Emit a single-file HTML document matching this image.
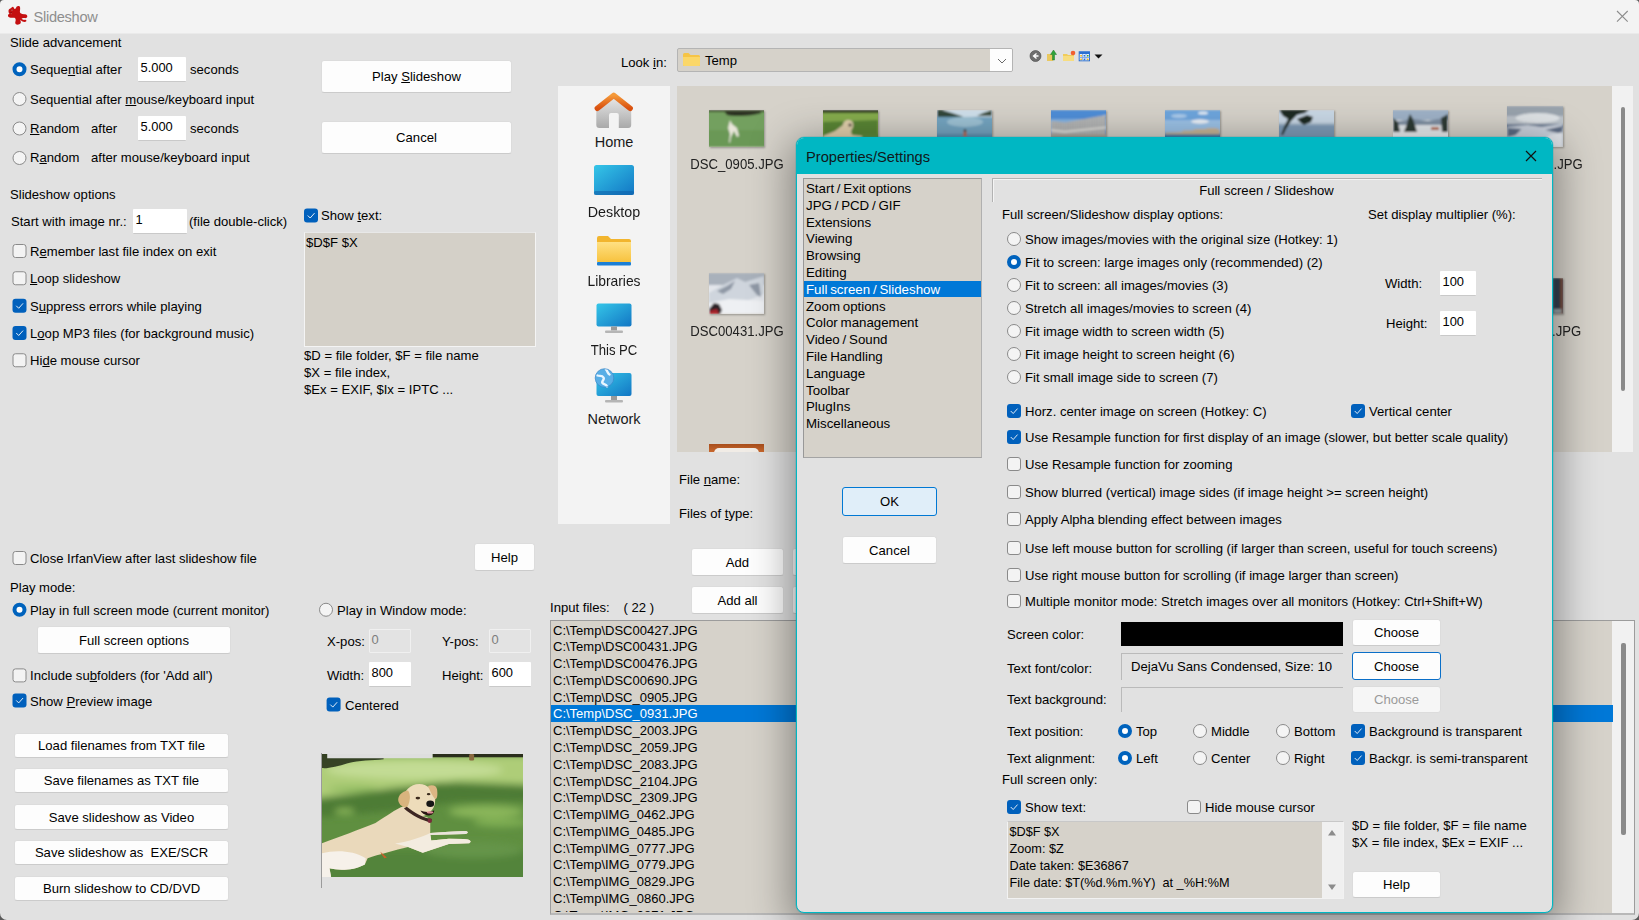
<!DOCTYPE html>
<html lang="en"><head><meta charset="utf-8"><title>Slideshow</title>
<style>
*{margin:0;padding:0}
html,body{width:1639px;height:920px;overflow:hidden;background:#e1e1e1}
body{position:relative;font-family:"Liberation Sans",sans-serif;font-size:13px;color:#000}
.t{position:absolute;white-space:pre;height:16px;line-height:16px;font-size:13.1px}
.t u,.b u{text-decoration:underline;text-underline-offset:1px;text-decoration-thickness:1px}
.seg{font-family:"Liberation Sans",sans-serif}
.pl{font-size:14.5px;text-align:center;height:18px;line-height:18px;color:#1a1a1a}
.fl{font-size:14.5px;text-align:center;height:18px;line-height:18px;color:#222;transform:scaleX(.905)}
.r{position:absolute;width:14px;height:14px;border-radius:50%;box-sizing:border-box;border:1px solid #8a8a8a;background:#f4f4f4}
.r.on{border:4.500px solid #0063bd;background:#fff}
.c{position:absolute;width:14px;height:14px;border-radius:3px;box-sizing:border-box;border:1px solid #8a8a8a;background:#f3f3f3}
.c.on{border:none;background:#0060bc}
.c svg{position:absolute;left:0;top:0;width:14px;height:14px}
.c path{stroke:#fff;stroke-width:.95;opacity:.92;fill:none;stroke-linecap:round;stroke-linejoin:round}
.b{position:absolute;box-sizing:border-box;background:#fdfdfd;border:1px solid #dcdcdc;border-bottom-color:#cbcbcb;border-radius:3px;text-align:center;font-size:13.1px;white-space:pre}
.b.def{background:#e0eef9;border:1px solid #0078d4}
.b.foc{border:1px solid #0a6fc8;background:#fdfdfd}
.b.disb{color:#9a9a9a;background:#f6f6f6;border-color:#dcdcdc}
.i{position:absolute;box-sizing:border-box;background:#fff;border-bottom:1px solid #c9c9c9;font-size:12.9px;line-height:16px;padding:3px 0 0 2.5px;white-space:pre;border-radius:1px}
.i.dis{background:#e3e3e3;border:1px solid #f0f0f0;color:#7d7d7d;padding:1.5px 0 0 1.5px}
.li{position:absolute;left:0;right:0;height:16.4px;line-height:17.6px;font-size:13px;white-space:pre;padding-left:2px}
.li.sel{background:#0078d7;color:#fff}
.cl .li{font-size:13.3px}
#dlg{position:absolute;left:796px;top:137px;width:757px;height:776px;box-sizing:border-box;background:#e1e1e1;border:1px solid #00b7c3;border-radius:8px;box-shadow:0 0 0 .5px rgba(0,150,165,.35),0 10px 40px 6px rgba(0,0,0,.38)}
</style></head>
<body>
<div style="position:absolute;left:0px;top:0px;width:1639px;height:34px;background:linear-gradient(180deg,#f3f3f3 0,#f3f3f3 33px,#eaeaea 33px)"></div>
<svg style="position:absolute;left:6px;top:5px" width="23" height="21" viewBox="89 74.200 341.320 311.640">
<path d="M245 100C258 88 282 86 292 96 302 108 300 135 296 160 293 178 296 190 306 198 322 210 345 214 368 212 392 210 408 228 405 246 402 264 385 272 362 268 342 264 326 268 320 280 332 292 350 300 372 294 388 290 396 304 390 316 380 328 352 328 334 318 322 310 310 300 302 292 304 310 314 330 306 346 296 364 262 370 244 364 226 356 222 336 230 316 236 298 234 278 222 266 206 262 180 266 158 264 136 262 118 250 118 230 118 216 128 208 142 208 130 196 122 172 128 150 132 134 146 126 162 122 172 112 184 98 194 102 204 108 206 124 216 132 228 140 238 120 245 100z" fill="#c40f10"/>
<path d="M160 150c10-8 22-6 28 2M150 185c8 6 20 6 28 0" stroke="#7a0a0a" stroke-width="9" fill="none"/><circle cx="178" cy="150" r="9" fill="#d8c8b8" opacity=".8"/><circle cx="166" cy="205" r="7" fill="#d8c8b8" opacity=".6"/></svg>
<div class="t seg" style="left:33.5px;top:9px;color:#8e8e8e;font-size:14.6px;letter-spacing:-0.28px">Slideshow</div>
<svg style="position:absolute;left:1616px;top:10px" width="13" height="13" viewBox="0 0 13 13"><path d="M1 1L11.700 11.700M11.700 1L1 11.700" stroke="#8c8c8c" stroke-width="1.100" fill="none"/></svg>
<svg style="position:absolute;left:0;top:0" width="1639" height="920" viewBox="0 0 1639 920"><path d="M0 0h4A4 4 0 0 0 0 4zM1639 0h-4a4 4 0 0 1 4 4zM0 920h7A7 7 0 0 1 0 913zM1639 920h-7a7 7 0 0 0 7-7z" fill="#5a5a5a"/></svg>
<div class="t " style="left:10px;top:35px;">Slide advancement</div>
<div class="r on" style="left:12px;top:62px;transform:translate(0.5px,0.3px)"></div>
<div class="t " style="left:30px;top:62px;">Seque<u>n</u>tial after</div>
<div class="i " style="left:138px;top:57px;width:48px;height:25px">5.000</div>
<div class="t " style="left:190px;top:62px;">seconds</div>
<div class="r" style="left:12px;top:92px;transform:translate(0.5px,0px)"></div>
<div class="t " style="left:30px;top:92px;">Sequential after <u>m</u>ouse/keyboard input</div>
<div class="r" style="left:12px;top:121px;transform:translate(0.5px,0.5px)"></div>
<div class="t " style="left:30px;top:121px;"><u>R</u>andom</div>
<div class="t " style="left:91px;top:121px;">after</div>
<div class="i " style="left:138px;top:116px;width:48px;height:25px">5.000</div>
<div class="t " style="left:190px;top:121px;">seconds</div>
<div class="r" style="left:12px;top:151px;transform:translate(0.5px,0px)"></div>
<div class="t " style="left:30px;top:150px;">R<u>a</u>ndom</div>
<div class="t " style="left:91px;top:150px;">after mouse/keyboard input</div>
<div class="b " style="left:321px;top:60px;width:191px;height:33px;line-height:32px">Play <u>S</u>lideshow</div>
<div class="b " style="left:321px;top:121px;width:191px;height:33px;line-height:32px">Cancel</div>
<div class="t " style="left:10px;top:187px;">Slideshow options</div>
<div class="t " style="left:11px;top:214px;">Start with image nr.:</div>
<div class="i " style="left:133px;top:209px;width:54px;height:25px">1</div>
<div class="t " style="left:189px;top:214px;">(file double-click)</div>
<div class="c" style="left:12px;top:244px;transform:translate(0.5px,0px)"></div>
<div class="t " style="left:30px;top:244px;">R<u>e</u>member last file index on exit</div>
<div class="c" style="left:12px;top:271px;transform:translate(0.5px,0.25px)"></div>
<div class="t " style="left:30px;top:271px;"><u>L</u>oop slideshow</div>
<div class="c on" style="left:12px;top:298px;transform:translate(0.5px,0.75px)"><svg viewBox="0 0 14 14"><path d="M4 7.300L6.200 9.500 10.300 4.900"/></svg></div>
<div class="t " style="left:30px;top:299px;">S<u>u</u>ppress errors while playing</div>
<div class="c on" style="left:12px;top:326px;transform:translate(0.5px,0px)"><svg viewBox="0 0 14 14"><path d="M4 7.300L6.200 9.500 10.300 4.900"/></svg></div>
<div class="t " style="left:30px;top:326px;">L<u>o</u>op MP3 files (for background music)</div>
<div class="c" style="left:12px;top:353px;transform:translate(0.5px,0.25px)"></div>
<div class="t " style="left:30px;top:353px;">Hi<u>d</u>e mouse cursor</div>
<div class="c on" style="left:304px;top:208px;transform:translate(0px,0.5px)"><svg viewBox="0 0 14 14"><path d="M4 7.300L6.200 9.500 10.300 4.900"/></svg></div>
<div class="t " style="left:321px;top:208px;">Show <u>t</u>ext:</div>
<div style="position:absolute;left:304px;top:232px;width:232px;height:115px;background:#d4d0c8;border:1px solid #f4f4f4;border-top-color:#e8e8e8;box-sizing:border-box"></div>
<div class="t " style="left:306px;top:235px;">$D$F $X</div>
<div class="t " style="left:304px;top:348px;">$D = file folder, $F = file name</div>
<div class="t " style="left:304px;top:365px;">$X = file index,</div>
<div class="t " style="left:304px;top:382px;">$Ex = EXIF, $Ix = IPTC ...</div>
<div class="c" style="left:12px;top:551px;transform:translate(0.5px,0px)"></div>
<div class="t " style="left:30px;top:551px;">Close IrfanView after last slideshow file</div>
<div class="b " style="left:474px;top:543px;width:61px;height:28px;line-height:27px">Help</div>
<div class="t " style="left:10px;top:580px;">Play mode:</div>
<div class="r on" style="left:12px;top:602px;transform:translate(0.5px,0.75px)"></div>
<div class="t " style="left:30px;top:603px;">Play in full screen mode (current monitor)</div>
<div class="b " style="left:37px;top:626px;width:194px;height:28px;line-height:27px">Full screen options</div>
<div class="c" style="left:12px;top:668px;transform:translate(0.5px,0.4px)"></div>
<div class="t " style="left:30px;top:668px;">Include su<u>b</u>folders (for 'Add all')</div>
<div class="c on" style="left:12px;top:693px;transform:translate(0.5px,0.4px)"><svg viewBox="0 0 14 14"><path d="M4 7.300L6.200 9.500 10.300 4.900"/></svg></div>
<div class="t " style="left:30px;top:694px;">Show <u>P</u>review image</div>
<div class="r" style="left:319px;top:602px;transform:translate(0px,0.75px)"></div>
<div class="t " style="left:337px;top:603px;">Play in Window mode:</div>
<div class="t " style="left:327px;top:634px;">X-pos:</div>
<div class="i dis" style="left:369px;top:629px;width:42px;height:24px">0</div>
<div class="t " style="left:442px;top:634px;">Y-pos:</div>
<div class="i dis" style="left:489px;top:629px;width:42px;height:24px">0</div>
<div class="t " style="left:327px;top:668px;">Width:</div>
<div class="i " style="left:369px;top:662px;width:42px;height:25px">800</div>
<div class="t " style="left:442px;top:668px;">Height:</div>
<div class="i " style="left:489px;top:662px;width:42px;height:25px">600</div>
<div class="c on" style="left:326px;top:697px;transform:translate(0.6px,0.6px)"><svg viewBox="0 0 14 14"><path d="M4 7.300L6.200 9.500 10.300 4.900"/></svg></div>
<div class="t " style="left:345px;top:698px;">Centered</div>
<div class="b " style="left:14px;top:733px;width:215px;height:25px;line-height:24px">Load filenames from TXT file</div>
<div class="b " style="left:14px;top:768px;width:215px;height:25px;line-height:24px">Save filenames as TXT file</div>
<div class="b " style="left:14px;top:804px;width:215px;height:26px;line-height:25px">Save slideshow as Video</div>
<div class="b " style="left:14px;top:840px;width:215px;height:25px;line-height:24px">Save slideshow as  EXE/SCR</div>
<div class="b " style="left:14px;top:876px;width:215px;height:25px;line-height:24px">Burn slideshow to CD/DVD</div>
<svg style="position:absolute;left:322px;top:753.500px" width="201" height="123" viewBox="72 52 1233 753" preserveAspectRatio="none">
<defs><filter id="bl" x="-20%" y="-20%" width="140%" height="140%"><feGaussianBlur stdDeviation="22"/></filter>
<filter id="b2" x="-20%" y="-20%" width="140%" height="140%"><feGaussianBlur stdDeviation="4"/></filter>
<clipPath id="cp"><rect x="72" y="52" width="1233" height="753"/></clipPath></defs>
<g clip-path="url(#cp)">
<rect x="72" y="52" width="1233" height="753" fill="#5f8f40"/>
<g filter="url(#bl)">
<path d="M20 60H1360V240L900 222 520 258 20 325z" fill="#aecd78"/>
<ellipse cx="640" cy="150" rx="540" ry="55" fill="#c3dc94"/>
<path d="M20 335L500 268 800 228 1360 255V340L900 345 520 400 20 440z" fill="#4d7c35"/>
<ellipse cx="1080" cy="405" rx="230" ry="38" fill="#8ab65a"/>
<ellipse cx="1170" cy="470" rx="170" ry="28" fill="#7fae52"/>
<ellipse cx="210" cy="402" rx="60" ry="18" fill="#8ab65a"/>
<ellipse cx="260" cy="265" rx="150" ry="18" fill="#93bd62"/>
<rect x="20" y="640" width="1340" height="220" fill="#53843a"/>
<ellipse cx="1000" cy="640" rx="300" ry="50" fill="#65944a"/>
</g>
<g filter="url(#b2)">
<path d="M72 52H450V84C380 92 300 90 230 108 170 126 110 142 72 138z" fill="#2b3820" opacity=".92"/>
<rect x="750" y="52" width="560" height="20" fill="#2a2f1c"/>
<rect x="975" y="52" width="30" height="40" rx="8" fill="#8a6a40"/>
<rect x="104" y="52" width="646" height="26" fill="#dedede"/>
<path d="M572 372C520 392 470 430 400 475 300 515 180 560 72 598V805H128L118 752C170 765 260 768 335 728L352 690C420 668 520 642 600 622L690 656 850 603 975 598C992 590 985 575 940 573L850 571 742 582 736 548 955 542C975 535 968 522 940 524L850 528 736 536 736 470 720 440 640 420z" fill="#ead9bb"/>
<path d="M72 660C150 640 260 640 340 690L335 728C260 768 170 765 118 752L128 805H72z" fill="#f6f1ea"/>
<path d="M520 600C600 590 690 560 736 536L742 582 850 571 940 573C985 575 992 590 975 598L850 603 690 656 600 622z" fill="#f3ece0"/>
<path d="M736 536L850 528 940 524C968 522 975 535 955 542L736 548z" fill="#e9e4dc"/>
<ellipse cx="668" cy="335" rx="98" ry="100" fill="#eddcba"/>
<path d="M600 275C560 280 535 310 540 340 548 372 585 388 598 372 612 340 618 300 600 275z" fill="#d9b47e"/>
<path d="M722 248C750 238 775 245 778 270 782 300 780 325 768 330 750 310 735 280 722 248z" fill="#dcb684"/>
<path d="M575 385C620 425 690 462 742 470L745 450C700 445 640 415 592 375z" fill="#3c2620"/>
<ellipse cx="733" cy="460" rx="13" ry="14" fill="#7a2a3a"/>
<ellipse cx="736" cy="356" rx="24" ry="20" fill="#151515"/>
<path d="M676 398C700 410 740 410 760 396 762 415 745 428 722 428 700 426 684 414 676 398z" fill="#2a1612"/>
<ellipse cx="735" cy="410" rx="20" ry="7" fill="#d98c94"/>
<ellipse cx="660" cy="322" rx="14" ry="8" fill="#3a2a1c"/>
<ellipse cx="726" cy="298" rx="11" ry="7" fill="#3a2a1c"/>
<path d="M430 650L470 685 455 690 438 668z" fill="#c8602a"/>
</g></g>
<rect x="72" y="52" width="6" height="753" fill="#8d8d8d" opacity=".0"/></svg>
<div style="position:absolute;left:321px;top:753px;width:1px;height:135px;background:#9b9b9b"></div>
<div class="t " style="left:621px;top:55px;">Look <u>i</u>n:</div>
<div style="position:absolute;left:677px;top:48px;width:336px;height:24px;background:#d6d2ca;border:1px solid #b4b4b4;border-radius:2px;box-sizing:border-box"></div>
<div style="position:absolute;left:990px;top:49px;width:22px;height:22px;background:#fdfdfd;border-radius:0 1px 1px 0"></div>
<svg style="position:absolute;left:996px;top:57px" width="12" height="8" viewBox="0 0 12 8"><path d="M2 2l4 4 4-4" stroke="#6a6a6a" stroke-width="1" fill="none"/></svg>
<svg style="position:absolute;left:682px;top:51px" width="19" height="17" viewBox="0 0 19 17"><path d="M1 3.500a1.500 1.500 0 0 1 1.500-1.500h4l2 2h8a1.500 1.500 0 0 1 1.500 1.500v8a1.500 1.500 0 0 1-1.500 1.500h-14a1.500 1.500 0 0 1-1.500-1.500z" fill="#f6c445"/><path d="M1 6h17v7.500a1.500 1.500 0 0 1-1.500 1.500h-14a1.500 1.500 0 0 1-1.500-1.500z" fill="#fbd768"/></svg>
<div class="t " style="left:705px;top:52.5px;">Temp</div>
<svg style="position:absolute;left:1027.500px;top:48px" width="78" height="16" viewBox="0 0 78 16">
<circle cx="7.500" cy="8" r="5.500" fill="#6e6e6e"/><circle cx="7.500" cy="8" r="5.500" fill="none" stroke="#444" stroke-width=".6"/><path d="M8.500 5.500L5.500 8l3 2.500M5.500 8h5" stroke="#fff" stroke-width="1.300" fill="none"/>
<path d="M19 6h5l1 1.500v5.500h-6z" fill="#e9c860"/><path d="M24.500 12V6.500h-2L25.500 2l3 4.500h-2V12z" fill="#2fa33a" stroke="#1d7a27" stroke-width=".5"/>
<path d="M35 6h4l1 1h6v6H35z" fill="#f0cc5c"/><path d="M35 8h11v5H35z" fill="#f7dd80"/><circle cx="45" cy="5" r="2.300" fill="#f06030"/>
<rect x="51.200" y="3.800" width="10.300" height="9" fill="#fff" stroke="#2a6fd0" stroke-width="1"/><rect x="51.200" y="3.800" width="10.300" height="2.300" fill="#2a6fd0"/><path d="M54.600 6v7M58 6v7M51.500 9.500h10" stroke="#7aa6e6" stroke-width=".9"/><rect x="52.300" y="7" width="1.600" height="1.600" fill="#e8b020"/><rect x="55.600" y="7" width="1.600" height="1.600" fill="#2a6fd0"/><rect x="59" y="7" width="1.600" height="1.600" fill="#3aa040"/><rect x="52.300" y="10.500" width="1.600" height="1.600" fill="#e8b020"/><rect x="55.600" y="10.500" width="1.600" height="1.600" fill="#2a6fd0"/><rect x="59" y="10.500" width="1.600" height="1.600" fill="#e8b020"/>
<path d="M66.500 6.500h8l-4 4z" fill="#111"/></svg>
<div style="position:absolute;left:558px;top:86px;width:112px;height:438px;background:#f3f3f3"></div>
<div class="t seg pl" style="left:558px;top:133px;width:112px">Home</div>
<div class="t seg pl" style="left:558px;top:203px;width:112px;transform:scaleX(0.985)">Desktop</div>
<div class="t seg pl" style="left:558px;top:272px;width:112px;transform:scaleX(0.955)">Libraries</div>
<div class="t seg pl" style="left:558px;top:341px;width:112px;transform:scaleX(0.905)">This PC</div>
<div class="t seg pl" style="left:558px;top:410px;width:112px">Network</div>
<svg style="position:absolute;left:593px;top:90px" width="42" height="40" viewBox="0 0 42 40">
<defs><linearGradient id="hg" x1="0" y1="0" x2="0" y2="1"><stop offset="0" stop-color="#ededed"/><stop offset="1" stop-color="#a9a9a9"/></linearGradient>
<linearGradient id="ho" x1="0" y1="0" x2="0" y2="1"><stop offset="0" stop-color="#f59a3a"/><stop offset="1" stop-color="#d9500f"/></linearGradient></defs>
<path d="M3.300 18L20.750 4.500 38.200 18v17a3 3 0 0 1-3 3h-9.400V25a2 2 0 0 0-2-2h-5.800a2 2 0 0 0-2 2v13H6.300a3 3 0 0 1-3-3z" fill="url(#hg)"/>
<path d="M4.300 18.300L20.750 5.300 37.200 18.300" stroke="url(#ho)" stroke-width="5.400" stroke-linecap="round" stroke-linejoin="round" fill="none"/></svg>
<svg style="position:absolute;left:593px;top:164px" width="42" height="34" viewBox="0 0 42 34">
<defs><linearGradient id="dg" x1="0" y1="0" x2="1" y2="1"><stop offset="0" stop-color="#35c6e8"/><stop offset="1" stop-color="#1276c4"/></linearGradient></defs>
<rect x="1" y="1" width="40" height="30" rx="2.500" fill="url(#dg)"/><rect x="1" y="27" width="40" height="4" rx="1.500" fill="#0f5fa8" opacity=".55"/></svg>
<svg style="position:absolute;left:595px;top:234px" width="38" height="34" viewBox="0 0 38 34">
<defs><linearGradient id="lg" x1="0" y1="0" x2="0" y2="1"><stop offset="0" stop-color="#ffe083"/><stop offset="1" stop-color="#f7c23e"/></linearGradient></defs>
<path d="M2 4a2 2 0 0 1 2-2h9l3 3h18a2 2 0 0 1 2 2v20H2z" fill="#f2b52e"/>
<path d="M2 8h34v20H2z" fill="url(#lg)"/><rect x="2" y="28" width="34" height="3.500" rx="1" fill="#1b7fd6"/></svg>
<svg style="position:absolute;left:595px;top:302px" width="38" height="34" viewBox="0 0 38 34">
<rect x="1.500" y="1.500" width="35" height="23" rx="2" fill="url(#dg)"/><rect x="16" y="24.500" width="6" height="4" fill="#9a9a9a"/><rect x="10" y="28.500" width="18" height="2.500" rx="1" fill="#b5b5b5"/></svg>
<svg style="position:absolute;left:593px;top:368px" width="42" height="36" viewBox="0 0 42 36">
<rect x="3.500" y="5" width="35" height="23" rx="2" fill="url(#dg)"/><rect x="18" y="28" width="6" height="4" fill="#9a9a9a"/><rect x="12" y="32" width="18" height="2.500" rx="1" fill="#b5b5b5"/>
<circle cx="11.500" cy="10" r="9.300" fill="#58aee6"/><path d="M4.500 7.500c2.500 1 4.500-.5 6 2s-2.500 3.500-1 5.500 3.500 1 4.500 3.500M13 1.500c2 2 1.500 4 3.500 5" stroke="#eaf6ff" stroke-width="2.400" fill="none" stroke-linecap="round"/><circle cx="11.500" cy="10" r="9.300" fill="none" stroke="#3a86c8" stroke-width=".7"/></svg>
<div style="position:absolute;left:677px;top:86px;width:935px;height:366px;background:#d6d2ca"></div>
<div style="position:absolute;left:1612px;top:86px;width:21px;height:366px;background:#f1f1f1"></div>
<div style="position:absolute;left:1620.5px;top:107px;width:4.5px;height:284px;background:#8a8a8a;border-radius:2px"></div>
<svg style="position:absolute;left:709px;top:110px;box-shadow:1px 1px 2px rgba(0,0,0,.3)" width="55" height="37" viewBox="0 0 55 37"><defs><filter id="tb709110" x="-20%" y="-20%" width="140%" height="140%"><feGaussianBlur stdDeviation=".8"/></filter></defs><g filter="url(#tb709110)"><rect x="-6" width="67" height="37" fill="#73a05e"/><rect x="-6" y="20" width="67" height="17" fill="#6a9856"/><path d="M14 0h38v3c-8 3-26 4-34 2z" fill="#2c2e22"/><rect x="-6" width="67" height="2" fill="#3a4a2c"/><path d="M21 10l2 4 5 4 2 8-2 1-3-6-3 6-1 6-1-1 1-8-2-6z" fill="#e9e6da"/></g></svg>
<svg style="position:absolute;left:823px;top:110px;box-shadow:1px 1px 2px rgba(0,0,0,.3)" width="55" height="37" viewBox="0 0 55 37"><defs><filter id="tb823110" x="-20%" y="-20%" width="140%" height="140%"><feGaussianBlur stdDeviation=".8"/></filter></defs><g filter="url(#tb823110)"><rect x="-6" width="67" height="37" fill="#86ad4e"/><rect x="-6" width="67" height="3" fill="#2f3a20"/><path d="M0 12l55-2v14l-55 4z" fill="#5a8636"/><rect x="-6" y="24" width="67" height="13" fill="#5f8c3a"/><path d="M0 26l12-5 8-6c0-5 8-7 10-2 1 4-1 6-2 8l1 4 10 1v2l-14 2-25 6z" fill="#e4d2ae"/><circle cx="27" cy="15" r="1.500" fill="#222"/></g></svg>
<svg style="position:absolute;left:937px;top:110px;box-shadow:1px 1px 2px rgba(0,0,0,.3)" width="55" height="37" viewBox="0 0 55 37"><defs><filter id="tb937110" x="-20%" y="-20%" width="140%" height="140%"><feGaussianBlur stdDeviation=".8"/></filter></defs><g filter="url(#tb937110)"><rect x="-6" width="67" height="37" fill="#74a6c2"/><rect x="-6" width="67" height="7" fill="#cfe0ec"/><path d="M0 0h5l10 3 9 3 2 1H0z" fill="#33463a"/><path d="M55 0l-9 3-6 3h15z" fill="#3d4f3c"/><ellipse cx="28" cy="12" rx="18" ry="5" fill="#a9cadb" opacity=".8"/><rect x="-6" y="24" width="67" height="13" fill="#5f93b3"/><rect x="26.500" y="21" width="3" height="6" rx="1" fill="#b8664a"/><circle cx="28" cy="20.500" r="1.200" fill="#3a2a22"/></g></svg>
<svg style="position:absolute;left:1051px;top:110px;box-shadow:1px 1px 2px rgba(0,0,0,.3)" width="55" height="37" viewBox="0 0 55 37"><defs><filter id="tb1051110" x="-20%" y="-20%" width="140%" height="140%"><feGaussianBlur stdDeviation=".8"/></filter></defs><g filter="url(#tb1051110)"><rect x="-6" width="67" height="37" fill="#4f8ed8"/><rect x="-6" y="9" width="67" height="12" fill="#8dbbe6" opacity=".8"/><clipPath id="ac"><path d="M0 11l6 .500 8 1 41-7.500v21H0z"/></clipPath><path d="M0 11l6 .500 8 1 41-7.500v21H0z" fill="#d4d3ce"/><g clip-path="url(#ac)"><rect x="1.0" y="6" width="1" height="20" fill="#7f8690"/><rect x="3.4" y="6" width="1" height="20" fill="#7f8690"/><rect x="5.8" y="6" width="1" height="20" fill="#7f8690"/><rect x="8.2" y="6" width="1" height="20" fill="#7f8690"/><rect x="10.6" y="6" width="1" height="20" fill="#7f8690"/><rect x="13.0" y="6" width="1" height="20" fill="#7f8690"/><rect x="15.4" y="6" width="1" height="20" fill="#7f8690"/><rect x="17.8" y="6" width="1" height="20" fill="#7f8690"/><rect x="20.2" y="6" width="1" height="20" fill="#7f8690"/><rect x="22.6" y="6" width="1" height="20" fill="#7f8690"/><rect x="25.0" y="6" width="1" height="20" fill="#7f8690"/><rect x="27.4" y="6" width="1" height="20" fill="#7f8690"/><rect x="29.8" y="6" width="1" height="20" fill="#7f8690"/><rect x="32.2" y="6" width="1" height="20" fill="#7f8690"/><rect x="34.6" y="6" width="1" height="20" fill="#7f8690"/><rect x="37.0" y="6" width="1" height="20" fill="#7f8690"/><rect x="39.4" y="6" width="1" height="20" fill="#7f8690"/><rect x="41.8" y="6" width="1" height="20" fill="#7f8690"/><rect x="44.2" y="6" width="1" height="20" fill="#7f8690"/><rect x="46.6" y="6" width="1" height="20" fill="#7f8690"/><rect x="49.0" y="6" width="1" height="20" fill="#7f8690"/><rect x="51.4" y="6" width="1" height="20" fill="#7f8690"/><rect x="53.8" y="6" width="1" height="20" fill="#7f8690"/><path d="M0 19l14 1.500 41-4v2l-41 4.500-14-1.500z" fill="#e0dfda"/></g><rect x="-6" y="24.500" width="67" height="13" fill="#aaa396"/></g></svg>
<svg style="position:absolute;left:1165px;top:110px;box-shadow:1px 1px 2px rgba(0,0,0,.3)" width="55" height="37" viewBox="0 0 55 37"><defs><filter id="tb1165110" x="-20%" y="-20%" width="140%" height="140%"><feGaussianBlur stdDeviation=".8"/></filter></defs><g filter="url(#tb1165110)"><rect x="-6" width="67" height="37" fill="#6ea6de"/><rect x="-6" y="10" width="67" height="12" fill="#a4c8ea" opacity=".85"/><ellipse cx="38" cy="3" rx="5" ry="1.600" fill="#e8f0f8"/><ellipse cx="35" cy="11.500" rx="9" ry="2.200" fill="#eef3f9"/><ellipse cx="14" cy="6" rx="8" ry="2" fill="#c4dcf2" opacity=".7"/><path d="M0 22.500l16-.500 3-1.500h8l4-1.500h9l3-1h8l4 2v6H0z" fill="#c9b698"/><rect x="-6" y="24.500" width="67" height="13" fill="#3f78a8"/></g></svg>
<svg style="position:absolute;left:1279px;top:110px;box-shadow:1px 1px 2px rgba(0,0,0,.3)" width="55" height="37" viewBox="0 0 55 37"><defs><filter id="tb1279110" x="-20%" y="-20%" width="140%" height="140%"><feGaussianBlur stdDeviation=".8"/></filter></defs><g filter="url(#tb1279110)"><rect x="-6" width="67" height="37" fill="#c9d8e6"/><rect x="-6" y="14" width="67" height="23" fill="#7f9cb8"/><rect x="-6" y="13" width="67" height="2" fill="#a9bccd"/><path d="M0 0h30l-4 3-8 2-6 6-5 8-3 6H2l3-8 4-8-5-3zM18 9l10-4 6 2-2 5-7 3-3-2z" fill="#1f2a22"/></g></svg>
<svg style="position:absolute;left:1393px;top:110px;box-shadow:1px 1px 2px rgba(0,0,0,.3)" width="55" height="37" viewBox="0 0 55 37"><defs><filter id="tb1393110" x="-20%" y="-20%" width="140%" height="140%"><feGaussianBlur stdDeviation=".8"/></filter></defs><g filter="url(#tb1393110)"><rect x="-6" width="67" height="37" fill="#e6eaee"/><rect x="-6" width="67" height="10" fill="#9fb2c8"/><path d="M0 12l20-3 15 2 20-4v8H0z" fill="#7f8fa3"/><path d="M17 4l3 5 2 6 2 7h-13l3-8 1-5zM0 8l5 4 2 10H0zM48 8l7-4v18h-6z" fill="#2f3a36"/><rect x="-6" y="22" width="67" height="15" fill="#eceff2"/><rect x="38" y="17" width="8" height="3" fill="#b86a4a"/></g></svg>
<svg style="position:absolute;left:1507px;top:106px;box-shadow:1px 1px 2px rgba(0,0,0,.3)" width="56" height="41" viewBox="0 0 55 41"><defs><filter id="tb1507106" x="-20%" y="-20%" width="140%" height="140%"><feGaussianBlur stdDeviation=".8"/></filter></defs><g filter="url(#tb1507106)"><rect x="-6" width="67" height="41" fill="#bcc3ca"/><rect x="-6" width="67" height="10" fill="#99a3ad"/><ellipse cx="30" cy="12" rx="22" ry="5" fill="#dfe3e6"/><rect x="-6" y="18" width="67" height="4" fill="#6f7f95"/><path d="M0 21l20-2 14 2 21-3v23H0z" fill="#ccd3de"/><path d="M0 22l14 1-6 6-8 2zM38 24l17-4v8z" fill="#5d6c84"/><path d="M30 41l12-12 13-3v15z" fill="#e2e6ec"/></g></svg>
<div class="t seg fl" style="left:682px;top:155px;width:110px">DSC_0905.JPG</div>
<div class="t seg fl" style="left:1481px;top:155px;width:110px">DSC_2307.JPG</div>
<svg style="position:absolute;left:709px;top:273px;box-shadow:1px 1px 2px rgba(0,0,0,.3)" width="55" height="41" viewBox="0 0 55 41"><defs><filter id="tb709273" x="-20%" y="-20%" width="140%" height="140%"><feGaussianBlur stdDeviation=".8"/></filter></defs><g filter="url(#tb709273)"><rect x="-6" width="67" height="41" fill="#e3e6eb"/><rect x="-6" width="67" height="12" fill="#a9b1bb"/><path d="M0 20l14-8 14-7 8 4 19-6v18l-20 8-35 2z" fill="#cfd5dd"/><path d="M8 18l10-5 8-5-4 8-8 5zM40 12l10-2 2 14-4-2z" fill="#8f98a5"/><path d="M0 30l20-4 35 2v13H0z" fill="#eef0f3"/><path d="M0 36l5-6 5 1 3 6-2 4H0z" fill="#2a2228"/><path d="M0 38l8-2 2 5H0z" fill="#a8202a"/></g></svg>
<div class="t seg fl" style="left:682px;top:322px;width:110px">DSC00431.JPG</div>
<svg style="position:absolute;left:1507px;top:278px;box-shadow:1px 1px 2px rgba(0,0,0,.3)" width="56" height="36" viewBox="0 0 55 36"><defs><filter id="tb1507278" x="-20%" y="-20%" width="140%" height="140%"><feGaussianBlur stdDeviation=".8"/></filter></defs><g filter="url(#tb1507278)"><rect x="-6" width="67" height="36" fill="#5a6470"/><rect x="46" width="8" height="36" fill="#33414f"/><rect x="53" width="2" height="36" fill="#8a4a28"/><rect x="46" y="31" width="8" height="4" fill="#9aa4a8"/></g></svg>
<div class="t seg fl" style="left:1481px;top:322px;width:110px">IMG_0777.JPG</div>
<div style="position:absolute;left:709px;top:444px;width:55px;height:8px;background:linear-gradient(180deg,#a84e1c 0,#c8682e 100%);overflow:hidden"><div style="position:absolute;left:5px;top:4px;width:45px;height:10px;border-radius:5px;background:#f1ece6"></div></div>
<div class="t " style="left:679px;top:472px;">File <u>n</u>ame:</div>
<div class="t " style="left:679px;top:506px;">Files of <u>t</u>ype:</div>
<div class="b " style="left:691px;top:548px;width:93px;height:28px;line-height:27px">Add</div>
<div class="b " style="left:691px;top:586px;width:93px;height:28px;line-height:27px">Add all</div>
<div class="b " style="left:792px;top:548px;width:92px;height:28px;line-height:27px"></div>
<div class="b " style="left:792px;top:586px;width:92px;height:28px;line-height:27px"></div>
<div class="t " style="left:550px;top:600px;">Input files:</div>
<div class="t " style="left:623.5px;top:600px;">( 22 )</div>
<div style="position:absolute;left:550px;top:619.5px;width:1085px;height:295.5px;background:#d6d2ca;border:1px solid #9c9c9c;border-bottom:2px solid #b8b8b8;box-sizing:border-box"></div>
<div style="position:absolute;left:1612px;top:621px;width:22px;height:292px;background:#f1f1f1"></div>
<div style="position:absolute;left:1620.5px;top:643px;width:5.0px;height:192px;background:#8a8a8a;border-radius:2px"></div>
<div style="position:absolute;left:551px;top:621px;width:1062px;height:291px;overflow:hidden"><div class="li" style="top:0.50px">C:\Temp\DSC00427.JPG</div><div class="li" style="top:17.28px">C:\Temp\DSC00431.JPG</div><div class="li" style="top:34.06px">C:\Temp\DSC00476.JPG</div><div class="li" style="top:50.84px">C:\Temp\DSC00690.JPG</div><div class="li" style="top:67.62px">C:\Temp\DSC_0905.JPG</div><div class="li sel" style="top:84.40px">C:\Temp\DSC_0931.JPG</div><div class="li" style="top:101.18px">C:\Temp\DSC_2003.JPG</div><div class="li" style="top:117.96px">C:\Temp\DSC_2059.JPG</div><div class="li" style="top:134.74px">C:\Temp\DSC_2083.JPG</div><div class="li" style="top:151.52px">C:\Temp\DSC_2104.JPG</div><div class="li" style="top:168.30px">C:\Temp\DSC_2309.JPG</div><div class="li" style="top:185.08px">C:\Temp\IMG_0462.JPG</div><div class="li" style="top:201.86px">C:\Temp\IMG_0485.JPG</div><div class="li" style="top:218.64px">C:\Temp\IMG_0777.JPG</div><div class="li" style="top:235.42px">C:\Temp\IMG_0779.JPG</div><div class="li" style="top:252.20px">C:\Temp\IMG_0829.JPG</div><div class="li" style="top:268.98px">C:\Temp\IMG_0860.JPG</div><div class="li" style="top:285.76px">C:\Temp\IMG_0871.JPG</div></div>
<div id="dlg"></div>
<div style="position:absolute;left:797px;top:138px;width:755px;height:36px;background:#00b7c3;border-radius:7px 7px 0 0"></div>
<div class="t seg" style="left:806px;top:148.5px;font-size:14.7px;color:#10181a">Properties/Settings</div>
<svg style="position:absolute;left:1525px;top:150px" width="12" height="12" viewBox="0 0 12 12"><path d="M1 1L11 11M11 1L1 11" stroke="#111" stroke-width="1.200" fill="none"/></svg>
<div style="position:absolute;left:803px;top:178px;width:179px;height:280px;background:#d6d2ca;border:1px solid #989898;border-bottom-color:#a4a4a4;border-right-color:#b0b0b0;box-sizing:border-box"></div>
<div class="cl" style="position:absolute;left:804px;top:180px;width:177px;height:277px;overflow:hidden;word-spacing:-.9px"><div class="li" style="top:0.00px">Start / Exit options</div><div class="li" style="top:16.80px">JPG / PCD / GIF</div><div class="li" style="top:33.60px">Extensions</div><div class="li" style="top:50.40px">Viewing</div><div class="li" style="top:67.20px">Browsing</div><div class="li" style="top:84.00px">Editing</div><div class="li sel" style="top:100.80px">Full screen / Slideshow</div><div class="li" style="top:117.60px">Zoom options</div><div class="li" style="top:134.40px">Color management</div><div class="li" style="top:151.20px">Video / Sound</div><div class="li" style="top:168.00px">File Handling</div><div class="li" style="top:184.80px">Language</div><div class="li" style="top:201.60px">Toolbar</div><div class="li" style="top:218.40px">PlugIns</div><div class="li" style="top:235.20px">Miscellaneous</div></div>
<div class="b def" style="left:842px;top:487px;width:95px;height:29px;line-height:28px">OK</div>
<div class="b " style="left:842px;top:536px;width:95px;height:28px;line-height:27px">Cancel</div>
<div style="position:absolute;left:992px;top:178px;width:549px;height:23px;border-left:1px solid #b2b2b2;border-top:1px solid #b2b2b2;box-shadow:inset 1px 1px 0 #f4f4f4"></div>
<div class="t" style="left:992px;top:183px;width:549px;text-align:center">Full screen / Slideshow</div>
<div class="t " style="left:1002px;top:207px;">Full screen/Slideshow display options:</div>
<div class="t " style="left:1368px;top:207px;">Set display multiplier (%):</div>
<div class="r" style="left:1007px;top:232px"></div>
<div class="t " style="left:1025px;top:232px;">Show images/movies with the original size (Hotkey: 1)</div>
<div class="r on" style="left:1007px;top:255px"></div>
<div class="t " style="left:1025px;top:255px;">Fit to screen: large images only (recommended) (2)</div>
<div class="r" style="left:1007px;top:278px"></div>
<div class="t " style="left:1025px;top:278px;">Fit to screen: all images/movies (3)</div>
<div class="r" style="left:1007px;top:301px"></div>
<div class="t " style="left:1025px;top:301px;">Stretch all images/movies to screen (4)</div>
<div class="r" style="left:1007px;top:324px"></div>
<div class="t " style="left:1025px;top:324px;">Fit image width to screen width (5)</div>
<div class="r" style="left:1007px;top:347px"></div>
<div class="t " style="left:1025px;top:347px;">Fit image height to screen height (6)</div>
<div class="r" style="left:1007px;top:370px"></div>
<div class="t " style="left:1025px;top:370px;">Fit small image side to screen (7)</div>
<div class="t " style="left:1385px;top:276px;">Width:</div>
<div class="i " style="left:1440px;top:271px;width:36px;height:25px">100</div>
<div class="t " style="left:1386px;top:316px;">Height:</div>
<div class="i " style="left:1440px;top:311px;width:36px;height:25px">100</div>
<div class="c on" style="left:1007px;top:404px"><svg viewBox="0 0 14 14"><path d="M4 7.300L6.200 9.500 10.300 4.900"/></svg></div>
<div class="t " style="left:1025px;top:404px;">Horz. center image on screen (Hotkey: C)</div>
<div class="c on" style="left:1007px;top:430px"><svg viewBox="0 0 14 14"><path d="M4 7.300L6.200 9.500 10.300 4.900"/></svg></div>
<div class="t " style="left:1025px;top:430px;">Use Resample function for first display of an image (slower, but better scale quality)</div>
<div class="c" style="left:1007px;top:457px"></div>
<div class="t " style="left:1025px;top:457px;">Use Resample function for zooming</div>
<div class="c" style="left:1007px;top:485px"></div>
<div class="t " style="left:1025px;top:485px;">Show blurred (vertical) image sides (if image height &gt;= screen height)</div>
<div class="c" style="left:1007px;top:512px"></div>
<div class="t " style="left:1025px;top:512px;">Apply Alpha blending effect between images</div>
<div class="c" style="left:1007px;top:541px"></div>
<div class="t " style="left:1025px;top:541px;">Use left mouse button for scrolling (if larger than screen, useful for touch screens)</div>
<div class="c" style="left:1007px;top:568px"></div>
<div class="t " style="left:1025px;top:568px;">Use right mouse button for scrolling (if image larger than screen)</div>
<div class="c" style="left:1007px;top:594px"></div>
<div class="t " style="left:1025px;top:594px;">Multiple monitor mode: Stretch images over all monitors (Hotkey: Ctrl+Shift+W)</div>
<div class="c on" style="left:1351px;top:404px"><svg viewBox="0 0 14 14"><path d="M4 7.300L6.200 9.500 10.300 4.900"/></svg></div>
<div class="t " style="left:1369px;top:404px;">Vertical center</div>
<div class="t " style="left:1007px;top:627px;">Screen color:</div>
<div style="position:absolute;left:1121px;top:622px;width:222px;height:24px;background:#000"></div>
<div class="b " style="left:1352px;top:619px;width:89px;height:27px;line-height:26px">Choose</div>
<div class="t " style="left:1007px;top:661px;">Text font/color:</div>
<div style="position:absolute;left:1121px;top:653px;width:222px;height:27px;border-left:1px solid #bababa;border-top:1px solid #bababa;box-sizing:border-box"></div>
<div class="t " style="left:1131px;top:658.5px;">DejaVu Sans Condensed, Size: 10</div>
<div class="b foc" style="left:1352px;top:652px;width:89px;height:28px;line-height:27px">Choose</div>
<div class="t " style="left:1007px;top:692px;">Text background:</div>
<div style="position:absolute;left:1121px;top:687px;width:222px;height:25px;border-left:1px solid #bababa;border-top:1px solid #bababa;box-sizing:border-box"></div>
<div class="b disb" style="left:1352px;top:686px;width:89px;height:27px;line-height:26px">Choose</div>
<div class="t " style="left:1007px;top:724px;">Text position:</div>
<div class="r on" style="left:1118px;top:724px"></div>
<div class="t " style="left:1136px;top:724px;">Top</div>
<div class="r" style="left:1193px;top:724px"></div>
<div class="t " style="left:1211px;top:724px;">Middle</div>
<div class="r" style="left:1276px;top:724px"></div>
<div class="t " style="left:1294px;top:724px;">Bottom</div>
<div class="c on" style="left:1351px;top:724px"><svg viewBox="0 0 14 14"><path d="M4 7.300L6.200 9.500 10.300 4.900"/></svg></div>
<div class="t " style="left:1369px;top:724px;">Background is transparent</div>
<div class="t " style="left:1007px;top:751px;">Text alignment:</div>
<div class="r on" style="left:1118px;top:751px"></div>
<div class="t " style="left:1136px;top:751px;">Left</div>
<div class="r" style="left:1193px;top:751px"></div>
<div class="t " style="left:1211px;top:751px;">Center</div>
<div class="r" style="left:1276px;top:751px"></div>
<div class="t " style="left:1294px;top:751px;">Right</div>
<div class="c on" style="left:1351px;top:751px"><svg viewBox="0 0 14 14"><path d="M4 7.300L6.200 9.500 10.300 4.900"/></svg></div>
<div class="t " style="left:1369px;top:751px;">Backgr. is semi-transparent</div>
<div class="t " style="left:1002px;top:772px;">Full screen only:</div>
<div class="c on" style="left:1007px;top:800px"><svg viewBox="0 0 14 14"><path d="M4 7.300L6.200 9.500 10.300 4.900"/></svg></div>
<div class="t " style="left:1025px;top:800px;">Show text:</div>
<div class="c" style="left:1187px;top:800px"></div>
<div class="t " style="left:1205px;top:800px;">Hide mouse cursor</div>
<div style="position:absolute;left:1007px;top:821px;width:337px;height:78px;background:#d6d2ca;border:1px solid #f2f2f2;border-top-color:#c8c8c8;box-sizing:border-box"></div>
<div style="position:absolute;left:1322px;top:822px;width:21px;height:76px;background:#f0f0f0"></div>
<svg style="position:absolute;left:1327px;top:828px" width="10" height="64" viewBox="0 0 10 64"><path d="M1 7.500L5 2l4 5.500zM1 56.500L5 62l4-5.500z" fill="#8c8c8c"/></svg>
<div class="t " style="left:1009.5px;top:824px;font-size:12.7px">$D$F $X</div>
<div class="t " style="left:1009.5px;top:841px;font-size:12.7px">Zoom: $Z</div>
<div class="t " style="left:1009.5px;top:858px;font-size:12.7px">Date taken: $E36867</div>
<div class="t " style="left:1009.5px;top:875px;font-size:12.7px">File date: $T(%d.%m.%Y)  at _%H:%M</div>
<div class="t " style="left:1352px;top:818px;">$D = file folder, $F = file name</div>
<div class="t " style="left:1352px;top:835px;">$X = file index, $Ex = EXIF ...</div>
<div class="b " style="left:1352px;top:871px;width:89px;height:27px;line-height:26px">Help</div>
</body></html>
